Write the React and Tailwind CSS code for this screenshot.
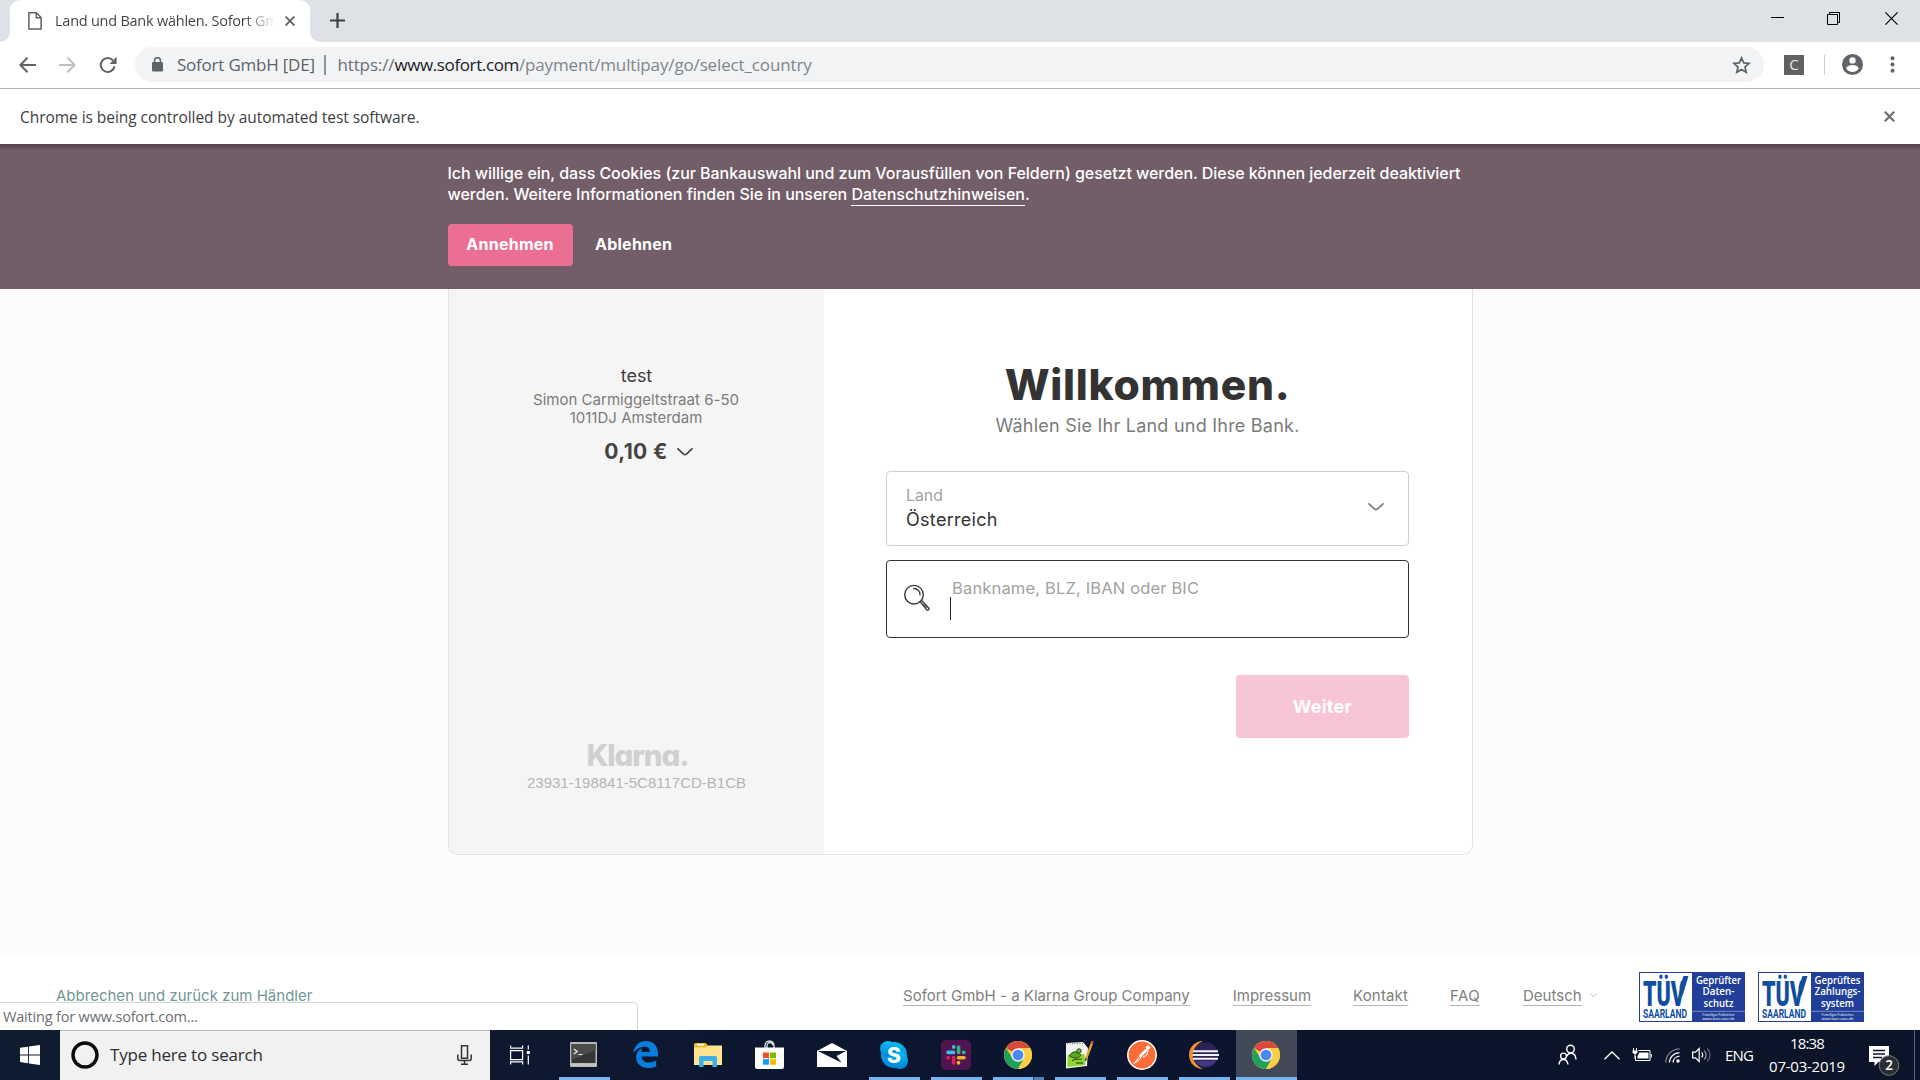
import React from "react";

const SEGOE = "font-['Open_Sans','Noto_Sans',sans-serif]";
const KLARNA = "font-['Inter','Roboto',sans-serif]";

function TabStrip() {
  return (
    <div className="flex h-[42px] shrink-0 items-start bg-[#dee1e6] text-[#3c4043]">
      <svg className="mt-8 h-[10px] w-[10px]" viewBox="0 0 10 10"><path d="M10 0v10H0A10 10 0 0 0 10 0z" fill="#fff" /></svg>
      <div className="flex h-[42px] w-[300px] items-center rounded-t-[10px] bg-white pb-[1px] pl-[18px]">
        <svg className="h-[18px] w-[14px]" viewBox="0 0 14 18" fill="none" stroke="#5f6368" strokeWidth="1.5">
          <path d="M.9.8h7.6l4.6 4.7v11.6H.9z" /><path d="M8.3.8v5h4.8" />
        </svg>
        <span className="ml-[13px] w-[221px] overflow-hidden bg-gradient-to-r from-[#3c4043] from-85% to-transparent to-100% bg-clip-text text-[14.5px] leading-[22px] tracking-[-0.24px] whitespace-nowrap text-transparent">
          Land und Bank wählen. Sofort GmbH
        </span>
        <svg className="ml-[9px] h-[10px] w-[10px]" viewBox="0 0 10 10" stroke="#5f6368" strokeWidth="1.9"><path d="M.6.6l8.8 8.8M9.4.6L.6 9.4" /></svg>
      </div>
      <svg className="mt-8 h-[10px] w-[10px]" viewBox="0 0 10 10"><path d="M0 0v10h10A10 10 0 0 1 0 0z" fill="#fff" /></svg>
      <svg className="mt-[13px] ml-[10px] h-[15px] w-[15px]" viewBox="0 0 15 15" stroke="#3c4043" strokeWidth="2.2"><path d="M7.5 0v15M0 7.5h15" /></svg>
      <div className="mr-[22px] ml-auto flex h-[37px] items-center text-black">
        <svg className="h-[13px] w-[13px]" viewBox="0 0 13 13" stroke="currentColor"><path d="M0 5.5h13" /></svg>
        <svg className="ml-[43px] h-[13px] w-[13px]" viewBox="0 0 13 13" fill="none" stroke="currentColor"><path d="M.5 2.5h10v10H.5zM2.5 2.5v-2h10v10h-2" /></svg>
        <svg className="ml-[45px] h-[13px] w-[13px]" viewBox="0 0 13 13" stroke="currentColor" strokeWidth="1.2"><path d="M.4.4l12.2 12.2M12.6.4L.4 12.6" /></svg>
      </div>
    </div>
  );
}

function Toolbar() {
  return (
    <div className="flex h-[47px] shrink-0 items-center border-b border-[#b0b0b2] bg-white pb-px pl-[19px]">
      <svg className="h-4 w-[17px]" viewBox="0 0 17 16" fill="none" stroke="#5f6368" strokeWidth="2"><path d="M17 8H1.600M8.500.8L1.400 8l7.100 7.200" /></svg>
      <svg className="ml-[23px] h-4 w-[17px]" viewBox="0 0 17 16" fill="none" stroke="#bdc0c3" strokeWidth="2"><path d="M0 8h15.400M8.500.8L15.600 8l-7.100 7.200" /></svg>
      <svg className="ml-[23px] h-[18px] w-[18px]" viewBox="0 0 18 18" fill="none">
        <path d="M15.600 10.300A7 7 0 1 1 13.900 4.200" stroke="#5f6368" strokeWidth="2" /><path d="M17.600.8v7.100h-7.100z" fill="#5f6368" />
      </svg>
      <div className="ml-[18px] flex h-[35px] w-[1629px] items-center rounded-full bg-[#f1f3f4] pr-[13px] pl-[17px] text-[17px] leading-6 whitespace-nowrap">
        <svg className="h-[15px] w-[11px]" viewBox="0 0 11 15"><rect y="5" width="11" height="9.500" rx="1.200" fill="#5f6368" /><path d="M2.600 6V3.600a2.900 2.900 0 0 1 5.800 0V6" fill="none" stroke="#5f6368" strokeWidth="1.500" /></svg>
        <span className="ml-[14px] w-[139px] tracking-[-0.22px] text-[#5f6368]">Sofort GmbH [DE]</span>
        <span className="ml-[8px] h-5 w-[1.5px] bg-[#8f9296]" />
        <span className="ml-[12px] tracking-[-0.14px] text-[#80868b]">
          <span className="text-[#6b7075]">https://</span><span className="tracking-[-0.38px] text-[#202124]">www.sofort.com</span>/payment/multipay/go/select_country
        </span>
        <svg className="ml-auto h-[18px] w-[19px]" viewBox="0 0 19 18" fill="none" stroke="#5f6368" strokeWidth="1.700"><path d="M9.500 1.900l2.200 5 5.400.5-4.100 3.600 1.200 5.300-4.700-2.800-4.700 2.800L6 11 1.900 7.400l5.400-.5z" /></svg>
      </div>
      <div className="ml-5 flex h-5 w-5 items-center justify-center bg-[#616161] font-['Open_Sans',sans-serif] text-[15px] text-[#e4e4e4]">C</div>
      <span className="ml-5 h-5 w-px bg-[#cdcfd2]" />
      <svg className="ml-[17px] h-[21px] w-[21px]" viewBox="0 0 21 21">
        <circle cx="10.500" cy="10.500" r="10.500" fill="#5f6368" /><circle cx="10.500" cy="6.400" r="3.200" fill="#fff" /><path d="M4.200 14.600c.5-2.400 4-3.500 6.300-3.500s5.800 1.100 6.300 3.500a7.500 7.500 0 0 1-12.600 0z" fill="#fff" />
      </svg>
      <svg className="ml-[27px] h-[17px] w-[5px]" viewBox="0 0 5 17" fill="#5f6368"><circle cx="2.500" cy="2.200" r="2" /><circle cx="2.500" cy="8.500" r="2" /><circle cx="2.500" cy="14.800" r="2" /></svg>
    </div>
  );
}

function InfoBar() {
  return (
    <div className="flex h-[55px] shrink-0 items-center justify-between bg-white pt-px pr-[25px] pl-5">
      <span className="text-[15.5px] leading-6 tracking-[-0.05px] text-[#3c4043]">Chrome is being controlled by automated test software.</span>
      <svg className="mb-[2px] h-[11px] w-[11px]" viewBox="0 0 11 11" stroke="#6a6e72" strokeWidth="2.200"><path d="M.8.8l9.400 9.400M10.200.8L.8 10.200" /></svg>
    </div>
  );
}

function CookieBanner() {
  return (
    <div className={`${KLARNA} h-[145px] shrink-0 bg-[#725e69] bg-gradient-to-b from-[#4f4149] to-[#725e69] to-[7px] pt-[19px] pl-[448px] text-base text-white`}>
      <p className="-ml-[0.5px] leading-[21px] font-medium whitespace-nowrap">
        <span className="block tracking-[-0.046px]">Ich willige ein, dass Cookies (zur Bankauswahl und zum Vorausfüllen von Feldern) gesetzt werden. Diese können jederzeit deaktiviert</span>
        <span className="block tracking-[-0.03px]">werden. Weitere Informationen finden Sie in unseren <a className="border-b border-white pb-px tracking-[-0.01px]">Datenschutzhinweisen</a>.</span>
      </p>
      <div className="mt-[19px] flex h-[42px] items-start font-bold">
        <button className="h-[42px] w-[125px] rounded-[4px] bg-[#eb6f93] pr-px pb-[2px] tracking-[0.25px]">Annehmen</button>
        <button className="ml-[22px] h-[42px] pb-[2px] tracking-[0.25px]">Ablehnen</button>
      </div>
    </div>
  );
}

function Chevron({ className }) {
  return (
    <svg className={className} viewBox="0 0 16 8" fill="none" stroke="currentColor" strokeWidth="1.700" strokeLinecap="round" strokeLinejoin="round"><path d="M1 .9l5.600 5.200q1.400 1.100 2.800 0L15 .9" /></svg>
  );
}

function Summary() {
  return (
    <aside className="flex w-[375px] flex-col items-center rounded-bl-[9px] bg-[#f5f5f5] pt-[76px] pb-[62px]">
      <h2 className="text-[18px] leading-[22px] tracking-[-0.05px] text-[#3f3f3f]">test</h2>
      <p className="mt-1 pr-px text-center text-[15px] leading-[18px] tracking-[0.02px] text-[#7c7c7a]">Simon Carmiggeltstraat 6-50<br />1011DJ Amsterdam</p>
      <div className="mt-[13px] flex items-center pl-[24px] text-[21px] leading-6 font-bold text-[#444442]">
        <span className="tracking-[0.35px]">0,10 €</span><Chevron className="ml-[9px] h-2 w-4" />
      </div>
      <div className="mt-auto pl-[2px] text-[29.5px] leading-[28px] font-extrabold tracking-[-1.05px] text-[#d0d0ce] [font-feature-settings:'cv11']">Klarna.</div>
      <div className="mt-[5px] font-['Liberation_Sans',sans-serif] text-[15px] leading-[18px] text-[#b6b6b4]">23931-198841-5C8117CD-B1CB</div>
    </aside>
  );
}

function BankForm() {
  return (
    <main className="flex flex-1 flex-col items-center pt-[75px] pr-px">
      <h1 className="text-[42.5px] leading-[42px] font-extrabold tracking-[0.7px] text-[#333]">Willkommen.</h1>
      <p className="mt-[8px] text-[18px] leading-6 tracking-[0.23px] text-[#7b7b79]">Wählen Sie Ihr Land und Ihre Bank.</p>
      <div className="mt-[33px] flex h-[75px] w-[523px] items-start justify-between rounded-[4px] border border-[#cfcfcd] pt-[14px] pr-[24px] pl-[19px]">
        <div className="flex flex-col">
          <span className="text-[15.8px] leading-5 text-[#a2a2a0]">Land</span>
          <span className="mt-[3px] text-[18px] leading-[22px] tracking-[0.3px] text-[#333]">Österreich</span>
        </div>
        <Chevron className="mt-[17px] h-2 w-4 text-[#7b7b79]" />
      </div>
      <div className="mt-[14px] flex h-[78px] w-[523px] items-start rounded-[4px] border border-[#333] pt-[17px] pl-[17px]">
        <svg className="mt-[6px] h-[27px] w-[26px]" viewBox="0 0 26 27" fill="none" stroke="#3a3a3a" strokeWidth="1.400" strokeLinecap="round">
          <circle cx="10" cy="10.700" r="9.300" /><path d="M9.800 4.500a6 6 0 0 1 6.200 6.200" /><path d="M16 17.600l6.600 8a1.300 1.300 0 0 0 2-1.700l-7-7.500" /><path d="M19.500 20l3 3.400" strokeWidth="1" />
        </svg>
        <div className="ml-5 flex flex-col">
          <span className="ml-[2px] text-[16.5px] leading-5 tracking-[0.16px] text-[#a2a2a0]">Bankname, BLZ, IBAN oder BIC</span>
          <span className="-mt-px h-[23px] w-px bg-[#222]" />
        </div>
      </div>
      <button className="mt-[37px] mr-[62px] h-[63px] w-[173px] self-end rounded-[4px] bg-[#f8c5d4] text-[18px] font-bold tracking-[0.25px] text-white">Weiter</button>
    </main>
  );
}

function TuvBadge({ lines }) {
  return (
    <svg className="h-[50px] w-[106px]" viewBox="0 0 106 50">
      <rect x=".5" y=".5" width="105" height="49" fill="#fff" stroke="#24429a" />
      <rect x="53" width="53" height="50" fill="#213f99" />
      <g fill="#0f4ea2">
        <text transform="translate(4 33.500) scale(1 1.380)" fontFamily="Roboto, sans-serif" fontWeight="900" fontSize="26" textLength="42" lengthAdjust="spacingAndGlyphs">TÜV</text>
        <path d="M40.500 15L44.500 4h5L43.500 24z" />
        <text x="4" y="46" fontFamily="Roboto, sans-serif" fontWeight="700" fontSize="12.500" textLength="44" lengthAdjust="spacingAndGlyphs">SAARLAND</text>
      </g>
      <g fill="#fff" textAnchor="middle" fontFamily="Open Sans, sans-serif">
        {lines.map(([text, width], i) => (
          <text key={text} x="79.500" y={11.7 + i * 11.7} fontWeight="600" fontSize="10.500" textLength={width} lengthAdjust="spacingAndGlyphs">{text}</text>
        ))}
        <path d="M53 39.300h53" stroke="#8ea0d0" strokeWidth=".8" />
        <text x="79.500" y="43.600" fontSize="3.600" textLength="32" lengthAdjust="spacingAndGlyphs">Freiwilliges Prüfzeichen</text>
        <text x="79.500" y="47.800" fontSize="3.600" textLength="32" lengthAdjust="spacingAndGlyphs">www.tuev-saar.de</text>
      </g>
    </svg>
  );
}

function Footer() {
  const link = "h-[20px] border-b border-[#b5b5b3] leading-[19px]";
  return (
    <footer className={`${KLARNA} relative flex h-[73px] shrink-0 items-start justify-between bg-white pl-[56px] text-[15px] whitespace-nowrap text-[#80807e]`}>
      <a className="mt-[29px] leading-5 tracking-[0.01px] text-[#6f9695]">Abbrechen und zurück zum Händler</a>
      <div className="flex w-[1017px] pt-[29px]">
        <a className={`${link} tracking-[0.030px]`}>Sofort GmbH - a Klarna Group Company</a>
        <a className={`${link} ml-[43px]`}>Impressum</a>
        <a className={`${link} ml-[42px] tracking-[0.150px]`}>Kontakt</a>
        <a className={`${link} ml-[42px] tracking-[0.400px]`}>FAQ</a>
        <a className={`${link} ml-[43px]`}>Deutsch</a>
        <svg className="mt-[7px] ml-[8px] h-[5px] w-[7px]" viewBox="0 0 7 5" fill="none" stroke="#c4c4c2" strokeWidth="1"><path d="M.5.5l3 3.500 3-3.500" /></svg>
        <div className="-mt-[14px] ml-auto flex gap-[13px] pr-14">
          <TuvBadge lines={[["Geprüfter", 45], ["Daten-", 32], ["schutz", 30]]} />
          <TuvBadge lines={[["Geprüftes", 46], ["Zahlungs-", 46], ["system", 33]]} />
        </div>
      </div>
      <div className={`${SEGOE} absolute bottom-0 left-0 h-[28px] w-[638px] rounded-tr-[5px] border-t border-r border-[#d5d6d8] bg-white pl-[3px] text-[14.5px] leading-[27px] tracking-[-0.18px] text-[#6a6e72]`}>Waiting for www.sofort.com...</div>
    </footer>
  );
}

const ChromeIcon = () => (
  <svg className="h-7 w-7" viewBox="0 0 28 28">
    <circle cx="14" cy="14" r="14" fill="#fbcf43" />
    <path d="M14 14L1.880 7A14 14 0 0 1 26.120 7z" fill="#d9483b" />
    <path d="M14 7h12.120" stroke="#d9483b" />
    <path d="M1.880 7A14 14 0 0 0 14 28l6-10.500L14 14 8.500 17z" fill="#1fa05c" />
    <path d="M14 7h12.120A14 14 0 0 1 14 28l6-10.500z" fill="#fbcf43" />
    <circle cx="14" cy="14" r="6.700" fill="#f1f3f4" /><circle cx="14" cy="14" r="5.300" fill="#4a87ee" />
  </svg>
);
const TerminalIcon = () => (
  <svg className="h-[25px] w-[27px]" viewBox="0 0 27 25">
    <rect width="27" height="25" rx="1" fill="#b9bab8" /><rect x="1.500" y="2" width="24" height="19" fill="#343634" /><path d="M1.500 2h24v6l-24 10z" fill="#4b4d4b" />
    <path d="M3.800 7l3.500 2.500-3.500 2.500M8.500 12.500h4" fill="none" stroke="#eee" strokeWidth="1.200" /><path d="M1 23h25" stroke="#e4e4e2" strokeDasharray="1 1" />
  </svg>
);
const EdgeIcon = () => (
  <svg className="h-[27px] w-[25px]" viewBox="0 0 25 27" fill="#0b7ddc"><path d="M0 12.200C1.200 4.500 6.500 0 13 0c7.500 0 12 5.300 12 12.300v3.200H8.600c.2 4 3.500 6 7.600 6 2.700 0 5-.8 7-2v6c-2.300 1-5 1.500-8 1.500-7 0-12-4-12-10.700 0-4.300 2.300-7.700 6-9.400C8 8 8.700 9.500 8.700 11H17c0-3.200-1.600-5.300-5-5.300-4.500 0-9 2.600-12 6.500z" /></svg>
);
const FolderIcon = () => (
  <svg className="h-6 w-7" viewBox="0 0 28 24"><path d="M0 1.500Q0 0 1.500 0h10L14 2.500V8H0z" fill="#f2b82c" /><path d="M3 1.800h7" stroke="#fff" strokeWidth="1.500" /><path d="M0 4.500h12l2-2h14V22H0z" fill="#ffe38e" /><path d="M5 24V14.500Q5 13 6.500 13h15q1.500 0 1.500 1.500V24h-4.500v-6h-9v6z" fill="#39b0e6" /></svg>
);
const StoreIcon = () => (
  <svg className="h-[29px] w-[29px]" viewBox="0 0 29 29"><path d="M10 8V5.500a4.500 4.500 0 0 1 9 0V8M12 8V5.500a3 3 0 0 1 6 0" fill="none" stroke="#dfe2e6" strokeWidth="1.300" /><path d="M0 7.500h29V27q0 2-2 2H2q-2 0-2-2z" fill="#fff" /><path d="M8 12.500h6v5.700H8z" fill="#f25022" /><path d="M15 12.500h6v5.700h-6z" fill="#7fba00" /><path d="M8 19.200h6v5.500H8z" fill="#00a4ef" /><path d="M15 19.200h6v5.500h-6z" fill="#ffb900" /></svg>
);
const MailIcon = () => (
  <svg className="h-6 w-[30px]" viewBox="0 0 30 24"><path d="M0 8L15 0l15 8v16H0z" fill="#fff" /><path d="M1 8h28l-9.500 5 5 6.500L15 15z" fill="#0c1730" /></svg>
);
const SkypeIcon = () => (
  <svg className="h-7 w-7" viewBox="0 0 28 28"><defs><linearGradient id="sky" x1="0" y1="0" x2="0" y2="1"><stop stopColor="#06bdf2" /><stop offset="1" stopColor="#0082d9" /></linearGradient></defs><g fill="url(#sky)"><circle cx="14" cy="14" r="13" /><circle cx="8" cy="8" r="8" /><circle cx="20" cy="20" r="8" /></g><text x="14" y="21.500" textAnchor="middle" fontFamily="Inter, sans-serif" fontWeight="800" fontSize="21" fill="#fff">S</text></svg>
);
const SlackIcon = () => (
  <svg className="h-[30px] w-[30px]" viewBox="0 0 30 30" strokeWidth="3.600" strokeLinecap="round"><rect width="30" height="30" rx="5" fill="#4f1551" />
    <path d="M7 12.400h5.500M12.700 6.900v.4" stroke="#3cbfe8" /><path d="M17.600 7v5.500M23 12.400h-.4" stroke="#2fb57f" /><path d="M23 17.700h-5.500M17.500 23v-.4" stroke="#eab32e" /><path d="M12.600 23v-5.500M7 17.700h.4" stroke="#e01e5a" />
  </svg>
);
const NotepadIcon = () => (
  <svg className="h-7 w-[29px]" viewBox="0 0 29 28"><path d="M1 2l17-1 5 6-1 18-21 2.500z" fill="#f3f4f0" /><path d="M2.500 14l17-1 1 11-18 2z" fill="#8ed631" /><path d="M2 2.500h16" stroke="#888" strokeWidth="1.500" strokeDasharray="1 1.500" /><path d="M4.500 15c2-5 7-5 10-2.500 3 2-1 5-4 4.500-3 0-4-1-6-2zM7 20c3-3 7-1 10-2" fill="#56a71f" stroke="#29451a" strokeWidth="1" /><circle cx="14" cy="10" r="2.200" fill="#72bd36" stroke="#29451a" /><path d="M11 22h7" stroke="#29451a" strokeWidth="1.200" /><path d="M27 2l-6 16" stroke="#e6a522" strokeWidth="2.300" /><path d="M27.500 0l-.8 3" stroke="#d05b4d" strokeWidth="2.300" /><path d="M21.200 17l-.8 3" stroke="#333" strokeWidth="1.200" /></svg>
);
const PostmanIcon = () => (
  <svg className="h-[30px] w-[30px]" viewBox="0 0 30 30"><circle cx="15" cy="15" r="14.200" fill="#ff6c37" stroke="#fff" strokeWidth="1.500" /><g stroke="#fff" fill="none" strokeLinecap="round"><circle cx="21" cy="7.500" r="1.700" fill="#fff" /><path d="M19.300 10.300l-5.800 5.500" strokeWidth="2.700" /><path d="M12.500 16.500L7 23.500M14.500 16.500l-2 3L8 23M21 10.500l-1 4.500-4 2" strokeWidth="1" /></g></svg>
);
const EclipseIcon = () => (
  <svg className="h-7 w-[30px]" viewBox="0 0 30 28"><path d="M14 0a14 14 0 0 0 0 28C7.500 25 4.500 20 4.500 14S7.500 3 14 0z" fill="#f09127" /><circle cx="16.500" cy="14" r="12.800" fill="#2c2255" /><path d="M6 20a12.800 12.800 0 0 0 21 0z" fill="#43398a" /><path d="M4 10.300h25M3.500 14h26.500M4 17.700h25" stroke="#f3f1fa" strokeWidth="1.900" /></svg>
);

const APPS = [
  { id: "terminal", Icon: TerminalIcon, open: true },
  { id: "edge", Icon: EdgeIcon },
  { id: "files", Icon: FolderIcon },
  { id: "store", Icon: StoreIcon },
  { id: "mail", Icon: MailIcon },
  { id: "skype", Icon: SkypeIcon, open: true },
  { id: "slack", Icon: SlackIcon, open: true },
  { id: "chrome", Icon: ChromeIcon, open: true, grouped: true },
  { id: "notepad", Icon: NotepadIcon, open: true },
  { id: "postman", Icon: PostmanIcon, open: true },
  { id: "eclipse", Icon: EclipseIcon, open: true },
  { id: "chrome-active", Icon: ChromeIcon, open: true, active: true },
];

function Tray() {
  return (
    <div className="ml-auto flex h-[50px] w-[362px] items-center text-[15px] text-white">
      <svg className="h-[22px] w-[19px]" viewBox="0 0 19 22" fill="none" stroke="#fff" strokeWidth="1.400"><circle cx="12.500" cy="5" r="3.800" /><path d="M1 20.500c.3-3 2-5 4.500-5s4 1.800 4.500 5M8.500 12.500c1-2 2.300-3.200 4.300-3.200 3 0 5 2.300 5.200 6.200" /><circle cx="5.500" cy="12" r="2.900" /></svg>
      <svg className="ml-[27px] h-[9px] w-4" viewBox="0 0 16 9" fill="none" stroke="#fff" strokeWidth="1.400"><path d="M.5 8.300L8 1l7.500 7.300" /></svg>
      <svg className="ml-3 h-[14px] w-5" viewBox="0 0 20 14" fill="none" stroke="#fff"><path d="M6.500 2.500h11.500v10H3.500V8" /><path d="M7.500 4.500h9v6h-11V8z" fill="#fff" stroke="none" /><path d="M19.300 6v3.500M1.500 0v3M4.500 0v3M3 6v5" /><path d="M.5 2.500h5v2q-2.500 3-5 0z" fill="#fff" stroke="none" /></svg>
      <svg className="ml-[13px] h-[15px] w-[15px]" viewBox="0 0 15 15" fill="none" strokeWidth="1.300"><path d="M.8 14.500A14 14 0 0 1 14.500.8" stroke="#7d8492" /><path d="M4.300 14.500A10.500 10.500 0 0 1 14.500 4.600M8 14.500a7 7 0 0 1 6.500-6.300" stroke="#fff" /><circle cx="13" cy="13" r="1.700" fill="#fff" /></svg>
      <svg className="ml-3 h-4 w-5" viewBox="0 0 20 16" fill="none" stroke="#fff" strokeWidth="1.200"><path d="M.6 5.200h2.900L7.200 1.500v13L3.500 10.800H.6z" /><path d="M9.800 5.500q1.800 2.500 0 5" /><path d="M12.300 3.500q3.500 4.500 0 9" stroke="#9aa0ac" /><path d="M15.300 1.500q5.500 6.500 0 13" stroke="#5d6473" /></svg>
      <span className="ml-[13px] w-7 tracking-[-0.8px]">ENG</span>
      <div className="mb-px ml-4 flex w-[76px] flex-col items-center leading-[23px]"><span className="tracking-[-0.85px]">18:38</span><span className="tracking-[-0.25px]">07-03-2019</span></div>
      <svg className="mt-[10px] ml-[24px] h-[31px] w-[31px]" viewBox="0 0 31 31">
        <path d="M0 1h20v16H9.500L5.500 21v-4H0z" fill="#fff" /><path d="M4 5.500h12M4 9h12M4 12.500h9" stroke="#0c1730" strokeWidth="1.300" /><circle cx="20" cy="20.500" r="9.800" fill="#2a2d33" stroke="#777b83" /><text x="20" y="25.400" textAnchor="middle" fontFamily="Open Sans, sans-serif" fontWeight="600" fontSize="13.500" fill="#fff">2</text>
      </svg>
      <span className="ml-auto h-full w-px bg-[#5f6674]" /><span className="w-[5px]" />
    </div>
  );
}

function Taskbar() {
  return (
    <div className="flex h-[50px] shrink-0 items-center bg-[#0c162e] bg-gradient-to-r from-[#101d31] via-[#0c152f] to-[#0b1428]">
      <div className="flex w-[60px] justify-center">
        <svg className="h-5 w-5" viewBox="0 0 20 20" fill="#fff"><path d="M0 2.800l8-1.100v7.800H0zM8.900 1.600L20 0v9.500H8.900zM0 10.400h8v7.800l-8-1.100zM8.900 10.400H20V20L8.900 18.400z" /></svg>
      </div>
      <div className="flex h-[50px] w-[430px] items-center border-t border-[#b9b9bd] bg-[#f1f1f1] pr-[18px] pb-px pl-[11px]">
        <svg className="h-7 w-7" viewBox="0 0 28 28"><circle cx="14" cy="14" r="12" fill="none" stroke="#0b0b0b" strokeWidth="3.400" /></svg>
        <span className="ml-[11px] text-[17px] leading-6 tracking-[-0.2px] text-[#2f2f2f]">Type here to search</span>
        <svg className="ml-auto h-5 w-[15px]" viewBox="0 0 15 20" fill="none" stroke="#333" strokeWidth="1.500"><rect x="4.500" y=".8" width="6" height="12.500" /><path d="M.8 9.500v4q0 2 2 2h9.400q2 0 2-2v-4M7.500 15.500v3.700M4 19.200h7" /></svg>
      </div>
      <div className="flex w-[64px] justify-center pr-[5px]">
        <svg className="h-5 w-5" viewBox="0 0 20 20" fill="none" stroke="#fff" strokeWidth="1.200"><path d="M.6 5.600h12v9H.6zM.6.5v2.600h12V.5M.6 19.500v-2.700h12v2.700M18.300.5v4M18.300 10.500v9" /><path d="M16.800 6h3v3h-3z" fill="#fff" stroke="none" /></svg>
      </div>
      {APPS.map(({ id, Icon, open, grouped, active }) => (
        <div key={id} className={`mr-px flex h-[50px] w-[61px] flex-col items-center ${active ? "bg-[#424a5a]" : ""}`}>
          <div className="flex h-[47px] items-center pt-[2px] pr-[2px]"><Icon /></div>
          {open && (
            <div className={`flex h-[3px] bg-[#76b5f0] ${active ? "w-[61px]" : "w-[51px]"}`}>
              {grouped && <span className="ml-auto w-[11px] border-l border-[#24405f] bg-[#5484b4]" />}
            </div>
          )}
        </div>
      ))}
      <Tray />
    </div>
  );
}

export default function App() {
  return (
    <div className={`${SEGOE} flex h-[1080px] w-[1920px] flex-col overflow-hidden bg-white`}>
      <TabStrip />
      <Toolbar />
      <InfoBar />
      <CookieBanner />
      <div className={`${KLARNA} flex h-[668px] shrink-0 bg-[#fcfcfc] pl-[448px]`}>
        <div className="flex h-[566px] w-[1025px] rounded-b-[10px] border-x border-b border-[#e2e2e2] bg-white">
          <Summary />
          <BankForm />
        </div>
      </div>
      <Footer />
      <Taskbar />
    </div>
  );
}
